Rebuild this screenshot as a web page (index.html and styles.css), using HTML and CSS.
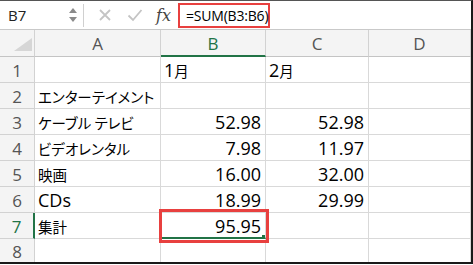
FILE: index.html
```html
<!DOCTYPE html>
<html lang="ja">
<head>
<meta charset="utf-8">
<link rel="stylesheet" href="styles.css">
</head>
<body>
<div class="frame">
  <div class="fbar">
    <div class="namebox">
      <span class="ref">B7</span>
      <span class="spin"><span class="up"></span><span class="down"></span></span>
    </div>
    <div class="sep"></div>
    <div class="btns">
      <svg class="ico" width="14" height="14" viewBox="0 0 14 14"><path d="M2 2 L12 12 M12 2 L2 12" stroke="#c4c4c4" stroke-width="1.8" fill="none"/></svg>
      <svg class="ico" width="16" height="14" viewBox="0 0 16 14"><path d="M1.5 7.5 L6 12 L14.5 2" stroke="#c4c4c4" stroke-width="1.8" fill="none"/></svg>
      <span class="fx">fx</span>
    </div>
    <div class="formula">=SUM(B3:B6)</div>
    <div class="frest"></div>
  </div>
  <div class="grid">
    <div class="h corner"><svg width="20" height="15" viewBox="0 0 20 15"><path d="M1 14 L19 14 L19 1 Z" fill="#d6d6d6"/></svg></div>
    <div class="h col">A</div>
    <div class="h col act">B</div>
    <div class="h col">C</div>
    <div class="h col">D</div>

    <div class="h rn">1</div><div class="c"></div><div class="c">1<span class="jp">月</span></div><div class="c">2<span class="jp">月</span></div><div class="c"></div>
    <div class="h rn">2</div><div class="c over"><span class="jp">エンターテイメント</span></div><div class="c"></div><div class="c"></div><div class="c"></div>
    <div class="h rn">3</div><div class="c"><span class="jp">ケーブル テレビ</span></div><div class="c n">52.98</div><div class="c n">52.98</div><div class="c"></div>
    <div class="h rn">4</div><div class="c"><span class="jp">ビデオレンタル</span></div><div class="c n">7.98</div><div class="c n">11.97</div><div class="c"></div>
    <div class="h rn">5</div><div class="c"><span class="jp">映画</span></div><div class="c n">16.00</div><div class="c n">32.00</div><div class="c"></div>
    <div class="h rn">6</div><div class="c">CDs</div><div class="c n">18.99</div><div class="c n">29.99</div><div class="c"></div>
    <div class="h rn actr">7</div><div class="c"><span class="jp">集計</span></div><div class="c n sel">95.95<span class="handle"></span></div><div class="c"></div><div class="c"></div>
    <div class="h rn last">8</div><div class="c last"></div><div class="c last"></div><div class="c last"></div><div class="c last"></div>
  </div>
  <div class="callout"></div>
</div>
</body>
</html>
```
FILE: styles.css
```css
* { box-sizing: border-box; }
html, body { margin: 0; padding: 0; background: #fff; }
body { width: 473px; height: 265px; overflow: hidden; }

.frame {
  position: relative;
  width: 473px;
  height: 264px;
  border-top: 1px solid #555;
  border-right: 2px solid #1a1a1a;
  border-bottom: 2px solid #1a1a1a;
  font-family: "Open Sans", "Noto Sans CJK JP", sans-serif;
  color: #000;
  overflow: hidden;
}

/* formula bar */
.fbar {
  display: flex;
  align-items: center;
  height: 29px;
  border-bottom: 1px solid #c9c9c9;
  background: #fff;
}
.namebox {
  width: 83px;
  height: 100%;
  display: flex;
  align-items: center;
  justify-content: space-between;
  padding: 0 6px 0 8px;
}
.ref { font-size: 15px; color: #222; }
.spin { display: flex; flex-direction: column; gap: 4px; }
.up, .down { width: 0; height: 0; border-left: 4px solid transparent; border-right: 4px solid transparent; }
.up { border-bottom: 5px solid #8a8a8a; }
.down { border-top: 5px solid #8a8a8a; }
.sep { width: 1px; height: 23px; background: #d0d0d0; }
.btns {
  display: flex;
  align-items: center;
  gap: 15px;
  padding: 0 0 0 14px;
  width: 94px;
}
.fx {
  font-family: "DejaVu Serif", "Liberation Serif", serif;
  font-style: italic;
  font-size: 16px;
  color: #444;
  margin-left: -2px;
}
.formula {
  width: 92px;
  height: 25px;
  border: 2px solid #e8403f;
  font-size: 14px;
  line-height: 21px;
  padding-left: 6px;
  color: #000;
  white-space: nowrap;
  letter-spacing: -0.2px;
}
.frest { flex: 1; }

/* grid */
.grid {
  display: grid;
  grid-template-columns: 35px 126px 105px 103px 102px;
  grid-template-rows: 27px repeat(7, 26px) 23px;
  background: #fff;
}
.h {
  background: #f4f4f4;
  color: #555;
  font-size: 17px;
  display: flex;
  align-items: center;
  justify-content: center;
  border-right: 1px solid #d2d2d2;
  border-bottom: 1px solid #d2d2d2;
}
.corner { justify-content: flex-end; align-items: flex-end; padding: 0 1px 4px 0; border-bottom-color: #c4c4c4; }
.col { padding-top: 1px; border-bottom-color: #c4c4c4; }
.col.act { color: #217346; border-bottom: 2px solid #217346; }
.rn { padding-top: 2px; }
.rn.actr { color: #217346; border-right: 2px solid #217346; }
.c {
  font-size: 18px;
  font-feature-settings: "palt";
  line-height: 25px;
  padding: 1px 3px 0 3px;
  white-space: nowrap;
  overflow: hidden;
  border-right: 1px solid #d9d9d9;
  border-bottom: 1px solid #d9d9d9;
}
.c.over { overflow: visible; position: relative; z-index: 1; }
.jp { font-size: 14.5px; font-family: "Noto Sans CJK JP", sans-serif; }
.c.n { text-align: right; padding-right: 4px; }
.sel { position: relative; border-bottom: 2px solid #217346; line-height: 24px; }
.handle { position: absolute; right: -1px; bottom: -2px; width: 4px; height: 4px; background: #217346; }
.last { border-bottom: none; }

.callout {
  position: absolute;
  left: 159px;
  top: 208px;
  width: 110px;
  height: 34px;
  border: 3px solid #e8403f;
  z-index: 2;
}
```
